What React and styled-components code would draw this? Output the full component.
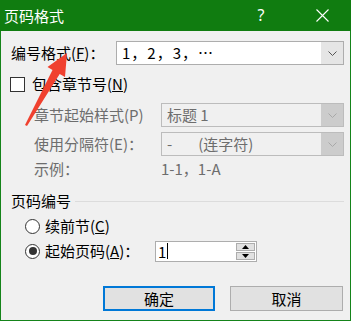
import React from "react";
import styled, { createGlobalStyle } from "styled-components";

const Global = createGlobalStyle`
  html, body { margin: 0; padding: 0; background: #ffffff; }
  body { font-family: "Noto Sans CJK SC", "Noto Sans", sans-serif; }
`;

const Dialog = styled.div`
  position: relative;
  width: 351px;
  height: 321px;
  box-sizing: border-box;
  background: #f0f0f0;
  border: 1px solid #15841a;
  border-top: none;
  box-shadow: 0 2px 4px rgba(0, 0, 0, 0.22);
  display: flex;
  flex-direction: column;
  font-size: 15px;
  color: #000;
  overflow: visible;
`;

const TitleBar = styled.div`
  height: 31px;
  margin: 0 -1px;
  background: #107c10;
  display: flex;
  align-items: center;
  padding-left: 4px;
  color: #fff;
  flex-shrink: 0;
`;

const Title = styled.div`
  flex: 1;
  font-size: 15px;
  line-height: 31px;
`;

const Help = styled.div`
  width: 14px;
  font-family: "Noto Sans", sans-serif;
  font-size: 16px;
  line-height: 31px;
  margin-right: 47px;
  text-align: center;
`;

const CloseBox = styled.div`
  width: 14px;
  height: 31px;
  margin-right: 22px;
  display: flex;
  align-items: center;
  justify-content: center;
`;

const Body = styled.div`
  display: flex;
  flex-direction: column;
  padding: 0 6px 0 10px;
  flex: 1;
`;

const Row = styled.div`
  display: flex;
  align-items: center;
  height: ${(p) => p.$h || 24}px;
  margin-top: ${(p) => p.$mt || 0}px;
  padding-left: ${(p) => p.$indent || 0}px;
`;

const Label = styled.span`
  width: ${(p) => (p.$w ? p.$w + "px" : "auto")};
  flex-shrink: 0;
  color: ${(p) => (p.$disabled ? "#6d6d6d" : "#000")};
  white-space: nowrap;
  line-height: 20px;
`;

const Select = styled.div`
  flex: 1;
  height: 24px;
  box-sizing: border-box;
  border: 1px solid ${(p) => (p.$disabled ? "#bcbcbc" : "#adadad")};
  background: ${(p) => (p.$disabled ? "#f0f0f0" : "#ffffff")};
  display: flex;
  align-items: stretch;
  color: ${(p) => (p.$disabled ? "#6d6d6d" : "#000")};
`;

const SelectText = styled.div`
  flex: 1;
  padding-left: 5px;
  line-height: 22px;
  white-space: pre;
  letter-spacing: ${(p) => p.$ls || 0}px;
`;

const Gap = styled.span`
  display: inline-block;
  width: ${(p) => p.$w}px;
`;

const DropButton = styled.div`
  width: 22px;
  background: ${(p) => (p.$disabled ? "#cccccc" : "#e5e5e5")};
  display: flex;
  align-items: center;
  justify-content: center;
`;

const Check = styled.div`
  width: 15px;
  height: 15px;
  box-sizing: border-box;
  border: 1px solid #333;
  background: #fff;
  margin-left: -1px;
  margin-right: 7px;
`;

const Radio = styled.div`
  width: 15px;
  height: 15px;
  box-sizing: border-box;
  border: 1px solid #333;
  border-radius: 50%;
  background: #fff;
  margin-right: 5px;
  display: flex;
  align-items: center;
  justify-content: center;
  &::after {
    content: "";
    display: ${(p) => (p.$checked ? "block" : "none")};
    width: 8px;
    height: 8px;
    border-radius: 50%;
    background: #333;
  }
`;

const GroupHeader = styled.div`
  display: flex;
  align-items: center;
  height: 20px;
  margin-top: 11px;
  gap: 4px;
`;

const Rule = styled.div`
  flex: 1;
  height: 1px;
  background: #dcdcdc;
`;

const Spinner = styled.div`
  width: 102px;
  height: 21px;
  box-sizing: border-box;
  border: 1px solid #adadad;
  background: #fff;
  display: flex;
  align-items: center;
`;

const SpinText = styled.div`
  flex: 1;
  padding-left: 2px;
  display: flex;
  align-items: center;
  line-height: 19px;
`;

const Caret = styled.span`
  display: inline-block;
  width: 1px;
  height: 16px;
  background: #000;
  margin-left: 1px;
`;

const SpinButtons = styled.div`
  display: flex;
  flex-direction: column;
  gap: 1px;
  margin-right: 1px;
`;

const SpinBtn = styled.div`
  width: 19px;
  height: 8px;
  box-sizing: border-box;
  border: 1px solid #adadad;
  background: #e1e1e1;
  display: flex;
  align-items: center;
  justify-content: center;
`;

const Buttons = styled.div`
  display: flex;
  justify-content: flex-end;
  gap: 15px;
  margin-top: 24px;
  padding-right: 1px;
`;

const Button = styled.div`
  width: ${(p) => p.$w}px;
  height: 25px;
  box-sizing: border-box;
  border: ${(p) => (p.$primary ? "2px solid #0078d7" : "1px solid #adadad")};
  background: #e1e1e1;
  display: flex;
  align-items: center;
  justify-content: center;
  font-size: 15px;
`;

const ArrowOverlay = styled.svg`
  position: absolute;
  left: 0;
  top: 0;
  pointer-events: none;
`;

const Chevron = ({ color }) => (
  <svg width="9" height="5" viewBox="0 0 9 5">
    <path d="M0.5 0.5 L4.5 4.5 L8.5 0.5" fill="none" stroke={color} strokeWidth="1" />
  </svg>
);

const U = styled.u`
  text-underline-offset: 1px;
`;

export default function App() {
  return (
    <>
      <Global />
      <Dialog>
        <TitleBar>
          <Title>页码格式</Title>
          <Help>?</Help>
          <CloseBox>
            <svg width="13" height="13" viewBox="0 0 13 13">
              <path d="M0.5 0.5 L12.5 12.5 M12.5 0.5 L0.5 12.5" stroke="#fff" strokeWidth="1.1" />
            </svg>
          </CloseBox>
        </TitleBar>
        <Body>
          <Row $mt={10}>
            <Label $w={105}>
              编号格式(<U>F</U>)：
            </Label>
            <Select>
              <SelectText $ls={1}>1，2，3，…</SelectText>
              <DropButton>
                <Chevron color="#555" />
              </DropButton>
            </Select>
          </Row>
          <Row $mt={7}>
            <Check />
            <Label>
              包含章节号(<U>N</U>)
            </Label>
          </Row>
          <Row $mt={7} $indent={23}>
            <Label $w={127} $disabled>
              章节起始样式(P)
            </Label>
            <Select $disabled>
              <SelectText>标题 1</SelectText>
              <DropButton $disabled>
                <Chevron color="#a8a8a8" />
              </DropButton>
            </Select>
          </Row>
          <Row $mt={5} $indent={23}>
            <Label $w={127} $disabled>
              使用分隔符(E)：
            </Label>
            <Select $disabled>
              <SelectText>
                -<Gap $w={26} />(连字符)
              </SelectText>
              <DropButton $disabled>
                <Chevron color="#a8a8a8" />
              </DropButton>
            </Select>
          </Row>
          <Row $mt={1} $h={23} $indent={23}>
            <Label $w={127} $disabled>
              示例：
            </Label>
            <Label $disabled>1-1，1-A</Label>
          </Row>
          <GroupHeader>
            <Label>页码编号</Label>
            <Rule />
          </GroupHeader>
          <Row $mt={4} $h={22} $indent={14}>
            <Radio />
            <Label>
              续前节(<U>C</U>)
            </Label>
          </Row>
          <Row $mt={3} $h={22} $indent={14}>
            <Radio $checked />
            <Label $w={110}>
              起始页码(<U>A</U>)：
            </Label>
            <Spinner>
              <SpinText>
                1<Caret />
              </SpinText>
              <SpinButtons>
                <SpinBtn>
                  <svg width="7" height="4" viewBox="0 0 7 4">
                    <path d="M0 4 L3.5 0 L7 4 Z" fill="#000" />
                  </svg>
                </SpinBtn>
                <SpinBtn>
                  <svg width="7" height="4" viewBox="0 0 7 4">
                    <path d="M0 0 L3.5 4 L7 0 Z" fill="#000" />
                  </svg>
                </SpinBtn>
              </SpinButtons>
            </Spinner>
          </Row>
          <Buttons>
            <Button $w={112} $primary>
              确定
            </Button>
            <Button $w={113}>取消</Button>
          </Buttons>
        </Body>
        <ArrowOverlay width="351" height="321" viewBox="0 0 351 321">
          <polygon
            points="66,53 64,77 58.7,74 26,126 24,125 51.5,70 46.5,67"
            fill="#f0412f"
          />
        </ArrowOverlay>
      </Dialog>
    </>
  );
}
